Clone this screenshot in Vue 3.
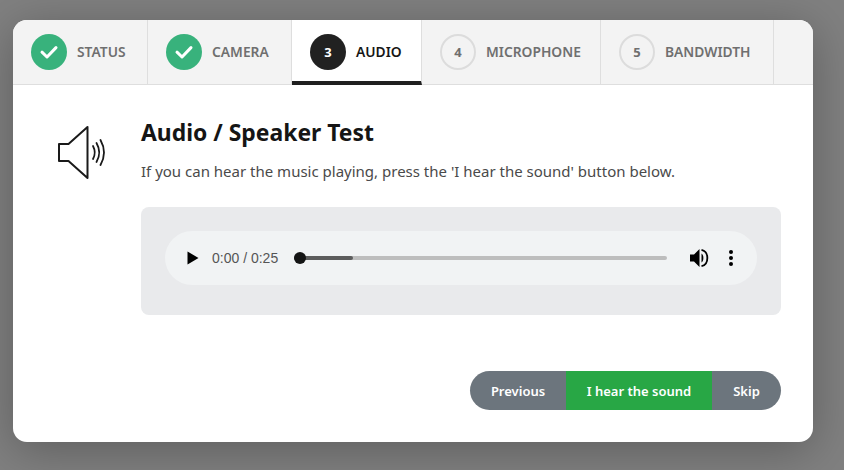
<script setup>
const steps = [
  { label: 'STATUS', done: true, width: 50 },
  { label: 'CAMERA', done: true, width: 59 },
  { label: 'AUDIO', num: 3, active: true, width: 45 },
  { label: 'MICROPHONE', num: 4, width: 94 },
  { label: 'BANDWIDTH', num: 5, width: 88 },
]
</script>

<template>
  <div class="backdrop">
    <div class="modal">
      <div class="tabs">
        <div v-for="s in steps" :key="s.label" class="tab" :class="{ active: s.active }">
          <span class="badge" :class="{ done: s.done, current: s.active }">
            <svg v-if="s.done" width="20" height="16" viewBox="0 0 20 16" fill="none">
              <path d="M3 8.2 L8 13 L17 3.6" stroke="#fff" stroke-width="3" stroke-linecap="round" stroke-linejoin="round" />
            </svg>
            <template v-else>{{ s.num }}</template>
          </span>
          <span class="label" :style="{ width: s.width + 'px' }">{{ s.label }}</span>
        </div>
      </div>
      <div class="body">
        <div class="icon-col">
          <svg width="50" height="56" viewBox="0 0 50 56" fill="none" stroke="#1a1a1a">
            <path d="M30.5 2 V53 L11.5 36 H2 V19 H11.5 Z" stroke-width="2" stroke-linejoin="round" />
            <path d="M36 21 Q39.5 27.5 36 34" stroke-width="1.8" stroke-linecap="round" />
            <path d="M39.5 18 Q45 27.5 39.5 37" stroke-width="1.8" stroke-linecap="round" />
            <path d="M43.5 15 Q50.5 27.5 43.5 40" stroke-width="1.8" stroke-linecap="round" />
          </svg>
        </div>
        <div class="main">
          <h1 class="title">Audio / Speaker Test</h1>
          <p class="desc">If you can hear the music playing, press the 'I hear the sound' button below.</p>
          <div class="panel">
            <div class="player">
              <svg class="play" width="12" height="14" viewBox="0 0 12 14"><path d="M0.5 0.5 V13.5 L11.5 7 Z" fill="#000" /></svg>
              <span class="time">0:00 / 0:25</span>
              <div class="track">
                <div class="buffered"></div>
                <div class="thumb"></div>
              </div>
              <svg class="vol" width="20" height="20" viewBox="0 0 20 20">
                <path d="M1 6.5 V13.5 H5 L10.5 19 V1 L5 6.5 Z" fill="#000" />
                <path d="M12.5 5.5 C15 7 15 13 12.5 14.5 Z" fill="#000" />
                <path d="M12.5 1.8 C20.3 3.5 20.3 16.5 12.5 18.2" stroke="#000" stroke-width="1.8" fill="none" />
              </svg>
              <div class="dots"><i></i><i></i><i></i></div>
            </div>
          </div>
          <div class="actions">
            <button class="btn prev">Previous</button>
            <button class="btn ok">I hear the sound</button>
            <button class="btn skip">Skip</button>
          </div>
        </div>
      </div>
    </div>
  </div>
</template>

<style>
html, body { margin: 0; padding: 0; overflow: hidden; }
</style>

<style scoped>
.backdrop {
  box-sizing: border-box;
  width: 844px;
  height: 470px;
  background: #808080;
  padding: 20px 31px 28px 13px;
  overflow: hidden;
  font-family: "Noto Sans", "Open Sans", sans-serif;
}
.modal {
  height: 422px;
  background: #fff;
  border-radius: 14px;
  overflow: hidden;
  box-shadow: 0 8px 48px rgba(0, 0, 0, 0.28);
}
.tabs {
  display: flex;
  height: 65px;
  box-sizing: border-box;
  background: #f3f3f3;
  border-bottom: 1px solid #dedede;
}
.tab {
  display: flex;
  align-items: center;
  gap: 10px;
  height: 65px;
  box-sizing: border-box;
  padding: 0 20px 1px 18px;
  border-right: 1px solid #dedede;
  color: #6f6f6f;
}
.tab.active {
  background: #fff;
  color: #161616;
  border-bottom: 4px solid #1f1f1f;
  padding-top: 4px;
}
.badge {
  display: flex;
  flex: none;
  align-items: center;
  justify-content: center;
  box-sizing: border-box;
  width: 36px;
  height: 36px;
  border-radius: 50%;
  border: 2px solid #dcdcdc;
  font-size: 13px;
  font-weight: 700;
  color: #6f6f6f;
}
.badge.done { background: #38b27c; border: 0; }
.badge.current { background: #212121; border: 0; color: #fff; }
.label {
  margin-bottom: 2px;
  font-size: 13.8px;
  font-weight: 600;
  white-space: nowrap;
}
.body { display: flex; padding: 32px 32px 0 0; }
.icon-col { width: 128px; padding: 8px 0 0 44px; box-sizing: border-box; }
.main { flex: 1; }
.title {
  margin: -1px 0 0;
  font-size: 22.9px;
  line-height: 34px;
  font-weight: 700;
  color: #151515;
}
.desc {
  margin: 10px 0 0;
  font-size: 15px;
  line-height: 22px;
  color: #4a4a4a;
}
.panel {
  margin-top: 25px;
  height: 108px;
  box-sizing: border-box;
  padding: 24px 24px 0;
  background: #e9eaec;
  border-radius: 8px;
}
.player {
  display: flex;
  align-items: center;
  height: 54px;
  padding: 0 24px 0 22px;
  background: #f1f3f4;
  border-radius: 27px;
  font-family: "Liberation Sans", Arial, sans-serif;
}
.play { flex: none; }
.time { margin-left: 13px; font-size: 14px; color: #555; white-space: nowrap; }
.track {
  position: relative;
  margin-left: 16px;
  flex: 1;
  height: 4px;
  border-radius: 2px;
  background: #bdbdbd;
}
.buffered {
  width: 59px;
  height: 4px;
  border-radius: 2px;
  background: #5c5c5c;
}
.thumb {
  position: absolute;
  left: 0;
  top: -4px;
  width: 12px;
  height: 12px;
  border-radius: 50%;
  background: #141414;
}
.vol { margin-left: 22px; flex: none; }
.dots {
  display: flex;
  flex-direction: column;
  gap: 2px;
  margin-left: 20px;
}
.dots i { display: block; width: 4px; height: 4px; border-radius: 50%; background: #000; }
.actions {
  display: flex;
  justify-content: flex-end;
  margin-top: 56px;
}
.btn {
  height: 39px;
  border: 0;
  padding: 0;
  font-family: inherit;
  font-size: 13px;
  font-weight: 600;
  color: #fff;
}
.prev { width: 96px; background: #6c757d; border-radius: 20px 0 0 20px; }
.ok { width: 146px; background: #28a745; }
.skip { width: 69px; background: #6c757d; border-radius: 0 20px 20px 0; }
</style>
